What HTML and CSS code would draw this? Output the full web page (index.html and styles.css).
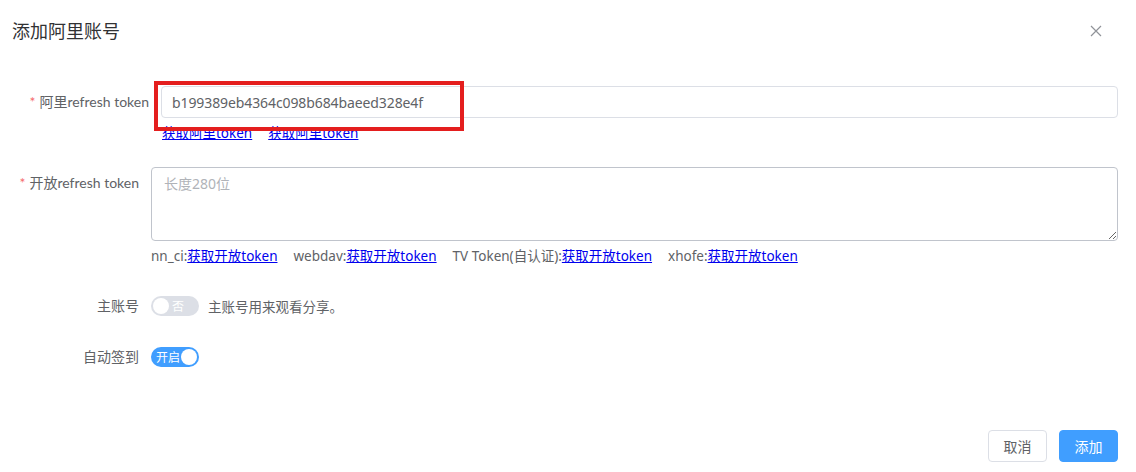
FILE: index.html
```html
<!DOCTYPE html>
<html lang="zh">
<head>
<meta charset="utf-8">
<link rel="stylesheet" href="styles.css">
</head>
<body>
<div class="dialog">
  <div class="header">
    <span class="title">添加阿里账号</span>
    <button class="close" aria-label="close">
      <svg width="12" height="12" viewBox="0 0 12 12"><path d="M1 1L11 11M11 1L1 11" stroke="#909399" stroke-width="1.2" fill="none"/></svg>
    </button>
  </div>
  <div class="form">
    <div class="item first">
      <label class="label"><span class="req">*</span>阿里refresh token</label>
      <div class="content">
        <input class="input" type="text" value="b199389eb4364c098b684baeed328e4f">
        <div class="links links1">
          <a href="#">获取阿里token</a>
          <a href="#">获取阿里token</a>
        </div>
      </div>
    </div>
    <div class="item second">
      <label class="label"><span class="req">*</span>开放refresh token</label>
      <div class="content">
        <textarea class="textarea" placeholder="长度280位"></textarea>
        <div class="links links2">
          <span>nn_ci:<a href="#">获取开放token</a></span>
          <span>webdav:<a href="#">获取开放token</a></span>
          <span>TV Token(自认证):<a href="#">获取开放token</a></span>
          <span>xhofe:<a href="#">获取开放token</a></span>
        </div>
      </div>
    </div>
    <div class="item sw-row main-row">
      <label class="label">主账号</label>
      <div class="content inline">
        <span class="switch off"><span class="sw-text">否</span><span class="knob"></span></span>
        <span class="hint">主账号用来观看分享。</span>
      </div>
    </div>
    <div class="item sw-row">
      <label class="label">自动签到</label>
      <div class="content inline">
        <span class="switch on"><span class="sw-text">开启</span><span class="knob"></span></span>
      </div>
    </div>
  </div>
  <div class="footer">
    <button class="btn">取消</button>
    <button class="btn primary">添加</button>
  </div>
  <div class="highlight"></div>
</div>
</body>
</html>
```

FILE: styles.css
```css
* { box-sizing: border-box; }
html, body { margin: 0; padding: 0; background: #fff; }
body {
  font-family: "Noto Sans", "Noto Sans CJK SC", sans-serif;
  font-size: 14px;
  color: #606266;
  width: 1136px;
  height: 472px;
  overflow: hidden;
}
.dialog { position: relative; width: 1136px; height: 472px; }
.header {
  height: 64px;
  display: flex;
  align-items: center;
  justify-content: space-between;
  padding: 0 34px 2px 12px;
}
.title { font-size: 18px; color: #303133; line-height: 24px; }
.close {
  border: 0; background: none; padding: 0; width: 12px; height: 12px;
  display: flex; align-items: center; justify-content: center;
}
.form { padding: 22px 18px 0 0; }
.item { display: flex; }
.label {
  width: 151px;
  flex: none;
  text-align: right;
  padding-right: 12px;
  line-height: 32px;
  color: #606266;
  white-space: nowrap;
  font-family: "Lato", "Noto Sans CJK SC", sans-serif;
}
.req { color: #f56c6c; margin-right: 4px; }
.content { flex: 1; min-width: 0; }
.first { margin-left: 10px; margin-bottom: 24px; }
.input {
  display: block;
  width: 100%;
  height: 32px;
  border: 1px solid #dcdfe6;
  border-radius: 4px;
  padding: 0 10px;
  font: inherit;
  font-size: 14px;
  letter-spacing: -0.1px;
  color: #606266;
  outline: none;
}
.links { font-size: 13.5px; line-height: 20px; color: #606266; }
.links1 { padding-top: 5px; display: flex; gap: 16px; padding-left: 1px; }
.links a { color: #0000ee; text-decoration: underline; }
.second { margin-bottom: 22px; }
.textarea {
  display: block;
  width: 100%;
  height: 74px;
  border: 1px solid #c0c4cc;
  border-radius: 4px;
  padding: 5px 12px;
  font: inherit;
  font-size: 14px;
  line-height: 22px;
  color: #606266;
  resize: vertical;
  outline: none;
}
.textarea::placeholder { color: #b0b3b8; }
.links2 { padding-top: 5px; display: flex; gap: 16px; }
.sw-row { height: 36px; align-items: center; }
.sw-row .label { line-height: 36px; }
.main-row { margin-bottom: 15px; }
.inline { display: flex; align-items: center; gap: 9px; }
.switch {
  position: relative;
  width: 48px;
  height: 20px;
  border-radius: 10px;
  display: inline-flex;
  align-items: center;
  font-size: 12px;
  color: #fff;
  flex: none;
}
.switch .knob {
  position: absolute;
  top: 2px;
  width: 16px; height: 16px;
  border-radius: 50%;
  background: #fff;
}
.switch.off { background: #dcdfe6; }
.switch.off .knob { left: 2px; }
.switch.off .sw-text { margin-left: 21px; }
.switch.on { background: #409eff; }
.switch.on .knob { right: 2px; }
.switch.on .sw-text { margin-left: 5px; }
.hint { font-size: 13.5px; color: #606266; }
.footer {
  position: absolute;
  left: 0; right: 0; top: 430px;
  display: flex;
  justify-content: flex-end;
  gap: 12px;
  padding-right: 18px;
}
.btn {
  height: 32px;
  width: 59px;
  border: 1px solid #dcdfe6;
  border-radius: 4px;
  background: #fff;
  color: #606266;
  font: inherit;
  font-size: 14px;
}
.btn.primary { background: #409eff; border-color: #409eff; color: #fff; }
.highlight {
  position: absolute;
  left: 154px; top: 81px;
  width: 310px; height: 50px;
  border: 4px solid #e41e1e;
}
```
